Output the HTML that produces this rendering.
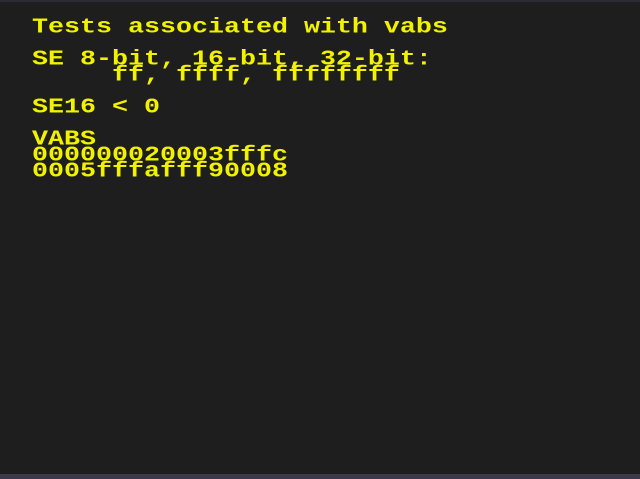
<!DOCTYPE html>
<html><head><style>
html,body{margin:0;padding:0;width:640px;height:479px;overflow:hidden;background:#1e1e1e;}
.t{position:absolute;left:32px;white-space:pre;font-family:"Liberation Mono",monospace;font-weight:bold;font-size:26.67px;line-height:16px;height:16px;color:#f2f200;transform:scaleY(0.8);transform-origin:0 100%;}
</style></head><body>
<div style="position:absolute;left:0;top:0;width:640px;height:2px;background:#2b2b36"></div>
<div style="position:absolute;left:0;top:474px;width:640px;height:5px;background:#3a3a4a"></div>
<div class="t" style="top:18px">Tests associated with vabs</div>
<div class="t" style="top:50px">SE 8-bit, 16-bit, 32-bit:</div>
<div class="t" style="top:66px">     ff, ffff, ffffffff</div>
<div class="t" style="top:98px">SE16 &lt; 0</div>
<div class="t" style="top:130px">VABS</div>
<div class="t" style="top:146px">000000020003fffc</div>
<div class="t" style="top:162px">0005fffafff90008</div>
</body></html>
